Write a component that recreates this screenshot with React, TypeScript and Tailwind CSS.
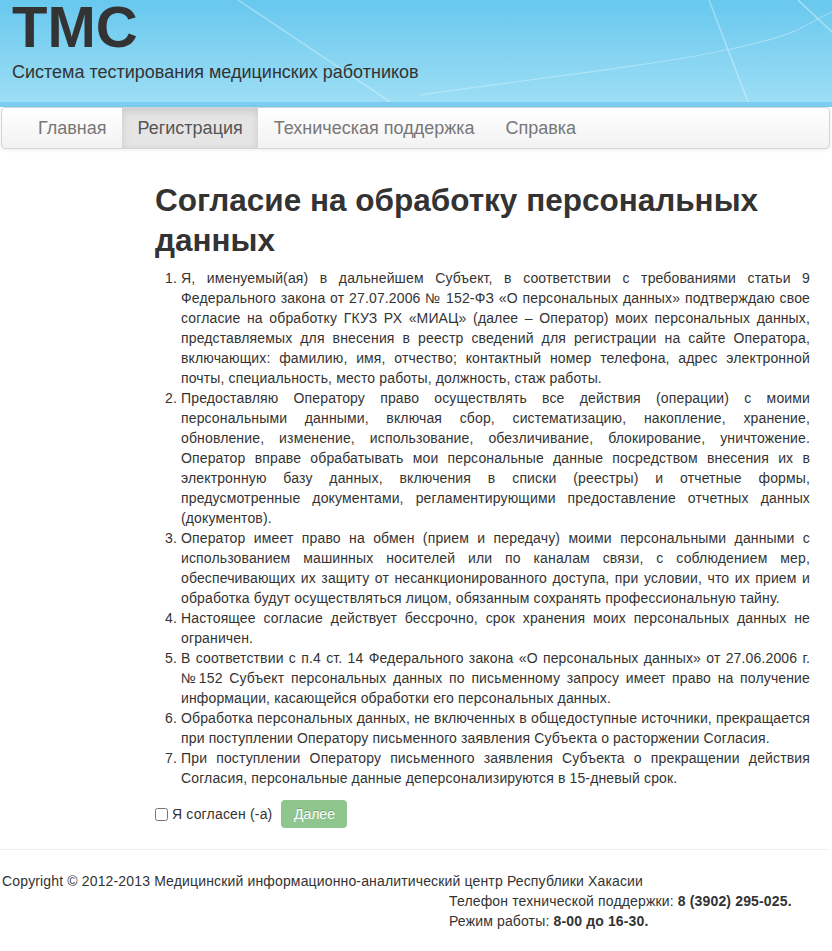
import React from "react";

const items: string[] = [
  "Я, именуемый(ая) в дальнейшем Субъект, в соответствии с требованиями статьи 9 Федерального закона от 27.07.2006 № 152-ФЗ «О персональных данных» подтверждаю свое согласие на обработку ГКУЗ РХ «МИАЦ» (далее – Оператор) моих персональных данных, представляемых для внесения в реестр сведений для регистрации на сайте Оператора, включающих: фамилию, имя, отчество; контактный номер телефона, адрес электронной почты, специальность, место работы, должность, стаж работы.",
  "Предоставляю Оператору право осуществлять все действия (операции) с моими персональными данными, включая сбор, систематизацию, накопление, хранение, обновление, изменение, использование, обезличивание, блокирование, уничтожение. Оператор вправе обрабатывать мои персональные данные посредством внесения их в электронную базу данных, включения в списки (реестры) и отчетные формы, предусмотренные документами, регламентирующими предоставление отчетных данных (документов).",
  "Оператор имеет право на обмен (прием и передачу) моими персональными данными с использованием машинных носителей или по каналам связи, с соблюдением мер, обеспечивающих их защиту от несанкционированного доступа, при условии, что их прием и обработка будут осуществляться лицом, обязанным сохранять профессиональную тайну.",
  "Настоящее согласие действует бессрочно, срок хранения моих персональных данных не ограничен.",
  "В соответствии с п.4 ст. 14 Федерального закона «О персональных данных» от 27.06.2006 г. №152 Субъект персональных данных по письменному запросу имеет право на получение информации, касающейся обработки его персональных данных.",
  "Обработка персональных данных, не включенных в общедоступные источники, прекращается при поступлении Оператору письменного заявления Субъекта о расторжении Согласия.",
  "При поступлении Оператору письменного заявления Субъекта о прекращении действия Согласия, персональные данные деперсонализируются в 15-дневый срок.",
];

const navLinks = ["Главная", "Регистрация", "Техническая поддержка", "Справка"];

function HeaderLines() {
  // faint light streaks on the banner
  return (
    <svg className="absolute inset-0 h-full w-full" viewBox="0 0 832 107" preserveAspectRatio="none">
      <line x1="238" y1="0" x2="398" y2="107" stroke="#ffffff" strokeOpacity="0.35" strokeWidth="1.5" />
      <line x1="709" y1="0" x2="750" y2="107" stroke="#ffffff" strokeOpacity="0.35" strokeWidth="1.5" />
      <line x1="798" y1="0" x2="832" y2="32" stroke="#ffffff" strokeOpacity="0.4" strokeWidth="1.5" />
      <path d="M420 95 C 520 80, 640 68, 726 50 S 800 25, 832 12" fill="none" stroke="#ffffff" strokeOpacity="0.3" strokeWidth="1.2" />
    </svg>
  );
}

export default function App() {
  return (
    <div className="min-h-[951px] bg-white text-[#333] font-['Liberation_Sans',Arial,sans-serif] text-[14px] leading-[20px]">
      {/* banner */}
      <div className="relative h-[107px] bg-[linear-gradient(to_bottom,#68c8ee,#9fdff5)]">
        <HeaderLines />
        <div className="absolute left-0 right-0 bottom-0 h-[5px] bg-[#7ccdf0]" />
        <div className="relative pl-[12px]">
          <div className="text-[58px] font-bold leading-[53px] text-[#333]">ТМС</div>
          <div className="mt-[9px] text-[18px] leading-[20px] text-[#333]">
            Система тестирования медицинских работников
          </div>
        </div>
      </div>

      {/* navbar */}
      <div className="ml-[1px] mr-[2px] h-[42px] rounded-[4px] border border-[#d4d4d4] bg-[linear-gradient(to_bottom,#ffffff,#f2f2f2)] shadow-[0_1px_4px_rgba(0,0,0,0.065)] relative">
        <ul className="flex h-full pl-[20.5px] text-[18px]">
          {navLinks.map((l, i) => (
            <li key={l}>
              <div
                className={
                  i === 1
                    ? "h-full flex items-center px-[15.5px] bg-[#e5e5e5] text-[#555] shadow-[inset_0_3px_8px_rgba(0,0,0,0.125)]"
                    : "h-full flex items-center px-[15.5px] text-[#777]"
                }
              >
                {l}
              </div>
            </li>
          ))}
        </ul>
      </div>

      {/* content */}
      <div className="pl-[155px] pr-[22px]">
        <h1 className="mt-[31px] mb-[8px] text-[31.5px] font-bold leading-[40px] text-[#333]">
          Согласие на обработку персональных данных
        </h1>
        <ol className="list-decimal pl-[26px] text-justify tracking-[0.14px]">
          {items.map((t, i) => (
            <li key={i}>{t}</li>
          ))}
        </ol>
        <div className="mt-[12px] flex items-center">
          <input type="checkbox" className="w-[13px] h-[13px] m-0 mr-[4px] accent-[#666]" />
          <span className="text-[14px] tracking-[0.17px]">Я согласен (-а)</span>
          <button
            disabled
            className="ml-[9px] h-[28px] w-[66px] rounded-[4px] bg-[#8fc68e] text-white text-[14px] [text-shadow:0_-1px_0_rgba(0,0,0,0.2)]"
          >
            Далее
          </button>
        </div>
      </div>

      {/* footer */}
      <div className="mt-[21px] mr-[3px] border-t border-[#eeeeee]" />
      <div className="pt-[21px] pl-[2px] tracking-[0.15px]">
        <div>Copyright © 2012-2013 Медицинский информационно-аналитический центр Республики Хакасии</div>
        <div className="pl-[447px]">
          <div>
            Телефон технической поддержки: <b>8 (3902) 295-025.</b>
          </div>
          <div>
            Режим работы: <b>8-00 до 16-30.</b>
          </div>
        </div>
      </div>
    </div>
  );
}
